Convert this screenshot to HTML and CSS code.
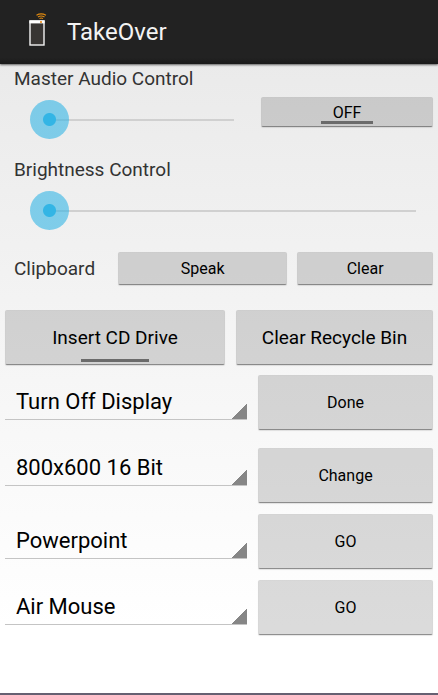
FILE: index.html
```html
<!DOCTYPE html>
<html lang="en">
<head>
    <meta charset="UTF-8">
    <meta name="viewport" content="width=device-width, initial-scale=1.0">
    <title>TakeOver</title>
    <link rel="stylesheet" href="styles.css">
</head>
<body>
    <header class="action-bar">
        <svg class="logo" width="24" height="36" viewBox="0 0 24 36" aria-hidden="true">
            <rect x="5" y="9" width="14" height="24" fill="#383533" stroke="#f2f2f2" stroke-width="1.4"/>
            <rect x="4.4" y="8.4" width="15.2" height="3" fill="#fff"/>
            <rect x="15" y="9" width="2" height="2" fill="#f0a040"/>
            <g fill="none" stroke="#e08a10" stroke-width="1.1">
                <path d="M11.5 3.2 Q16 0.6 21 3.2"/>
                <path d="M13 5 Q16 3 19.5 5"/>
                <path d="M14.5 6.6 Q16.2 5.4 18 6.6"/>
            </g>
        </svg>
        <h1>TakeOver</h1>
    </header>

    <main class="content">
        <div class="audio-row">
            <div class="control">
                <label for="volume">Master Audio Control</label>
                <input type="range" id="volume" class="slider" min="0" max="100" value="0">
            </div>
            <button type="button" class="btn small toggle" aria-pressed="false">OFF</button>
        </div>

        <div class="control brightness">
            <label for="brightness">Brightness Control</label>
            <input type="range" id="brightness" class="slider" min="0" max="100" value="0">
        </div>

        <div class="clipboard-row">
            <span class="clipboard-label">Clipboard</span>
            <button type="button" class="btn small speak">Speak</button>
            <button type="button" class="btn small clear">Clear</button>
        </div>

        <div class="drive-row">
            <button type="button" class="btn large toggle wide" aria-pressed="false">Insert CD Drive</button>
            <button type="button" class="btn large">Clear Recycle Bin</button>
        </div>

        <div class="actions">
            <div class="action-row">
                <select class="spinner" aria-label="Power action">
                    <option>Turn Off Display</option>
                </select>
                <button type="button" class="btn">Done</button>
            </div>
            <div class="action-row resolution">
                <select class="spinner" aria-label="Screen resolution">
                    <option>800x600 16 Bit</option>
                </select>
                <button type="button" class="btn">Change</button>
            </div>
            <div class="action-row">
                <select class="spinner" aria-label="Application">
                    <option>Powerpoint</option>
                </select>
                <button type="button" class="btn">GO</button>
            </div>
            <div class="action-row">
                <select class="spinner" aria-label="Remote mode">
                    <option>Air Mouse</option>
                </select>
                <button type="button" class="btn">GO</button>
            </div>
        </div>
    </main>
</body>
</html>
```

FILE: styles.css
```css
* {
    box-sizing: border-box;
}

body {
    font-family: Roboto, sans-serif;
    margin: 0;
    min-height: 100vh;
    display: flex;
    flex-direction: column;
    color: #333;
    background: linear-gradient(#e8e8e8, #fff 90%);
    border-bottom: 2px solid #666072;
}

/* Title bar */
.action-bar {
    display: flex;
    align-items: center;
    gap: 18px;
    height: 64px;
    padding: 0 25px;
    background: linear-gradient(#222 90%, #1a1a1a);
    box-shadow: 0 1px 2px rgba(0, 0, 0, 0.6);
}

.logo {
    margin-bottom: 4px;
}

h1 {
    margin: 0;
    font-size: 24px;
    font-weight: 400;
    color: #f3f3f3;
}

.content {
    padding: 3px 5px 0;
}

/* Sliders */
.audio-row {
    display: flex;
    align-items: flex-end;
    gap: 8px;
}

.control {
    flex: 1;
    display: flex;
    flex-direction: column;
    gap: 9px;
    font-size: 19px;
    line-height: 24px;
}

.control label {
    padding-left: 9px;
}

.slider {
    appearance: none;
    height: 39px;
    margin: 0 0 0 25px;
    background: linear-gradient(#d0d0d0, #d0d0d0) center / calc(100% - 39px) 2px no-repeat;
}

.slider::-webkit-slider-thumb {
    appearance: none;
    width: 39px;
    height: 39px;
    border-radius: 50%;
    background: radial-gradient(circle, #33b5e5 6px, rgba(51, 181, 229, 0.6) 7px);
}

.slider::-moz-range-thumb {
    width: 39px;
    height: 39px;
    border: none;
    border-radius: 50%;
    background: radial-gradient(circle, #33b5e5 6px, rgba(51, 181, 229, 0.6) 7px);
}

.audio-row .btn {
    width: 172px;
    height: 30px;
    margin-bottom: 12px;
}

.brightness {
    margin: 19px -2px 0 0;
}

/* Buttons */
.btn {
    position: relative;
    height: 55px;
    padding: 0;
    border: 1px solid rgba(0, 0, 0, 0.02);
    border-bottom: 1px solid rgba(0, 0, 0, 0.35);
    border-radius: 2px;
    background-color: rgba(0, 0, 0, 0.14);
    box-shadow: 0 1px 1px rgba(0, 0, 0, 0.1);
    font-family: inherit;
    font-size: 16px;
    color: #000;
}

.btn.large {
    font-size: 19px;
}

.btn:active {
    background-color: #33b5e5;
}

.toggle::after {
    content: "";
    position: absolute;
    left: 50%;
    bottom: 2px;
    width: 52px;
    height: 3px;
    background-color: #6b6b6b;
    transform: translateX(-50%);
}

.toggle.wide::after {
    width: 68px;
}

.clipboard-row {
    display: flex;
    align-items: center;
    margin-top: 22px;
}

.clipboard-label {
    width: 113px;
    padding-left: 9px;
    font-size: 19px;
}

.clipboard-row .btn {
    height: 33px;
}

.speak {
    flex: 5;
}

.clear {
    flex: 4;
    margin-left: 10px;
}

.drive-row {
    display: grid;
    grid-template-columns: 220fr 197fr;
    gap: 11px;
    margin-top: 25px;
}

/* Drop-downs with their action button */
.actions {
    display: flex;
    flex-direction: column;
    gap: 11px;
    margin-top: 10px;
}

.action-row {
    display: flex;
    align-items: flex-start;
    gap: 11px;
}

.action-row .btn {
    width: 175px;
}

.resolution .btn {
    margin-top: 7px;
}

.spinner {
    appearance: none;
    flex: 1;
    min-width: 0;
    height: 45px;
    padding: 8px 20px 0 11px;
    border: none;
    border-bottom: 1px solid #c4c4c4;
    border-radius: 0;
    background: linear-gradient(135deg, transparent 50%, #868686 50%) right bottom / 16px 16px no-repeat border-box;
    font-family: inherit;
    font-size: 22px;
    color: #000;
}
```
